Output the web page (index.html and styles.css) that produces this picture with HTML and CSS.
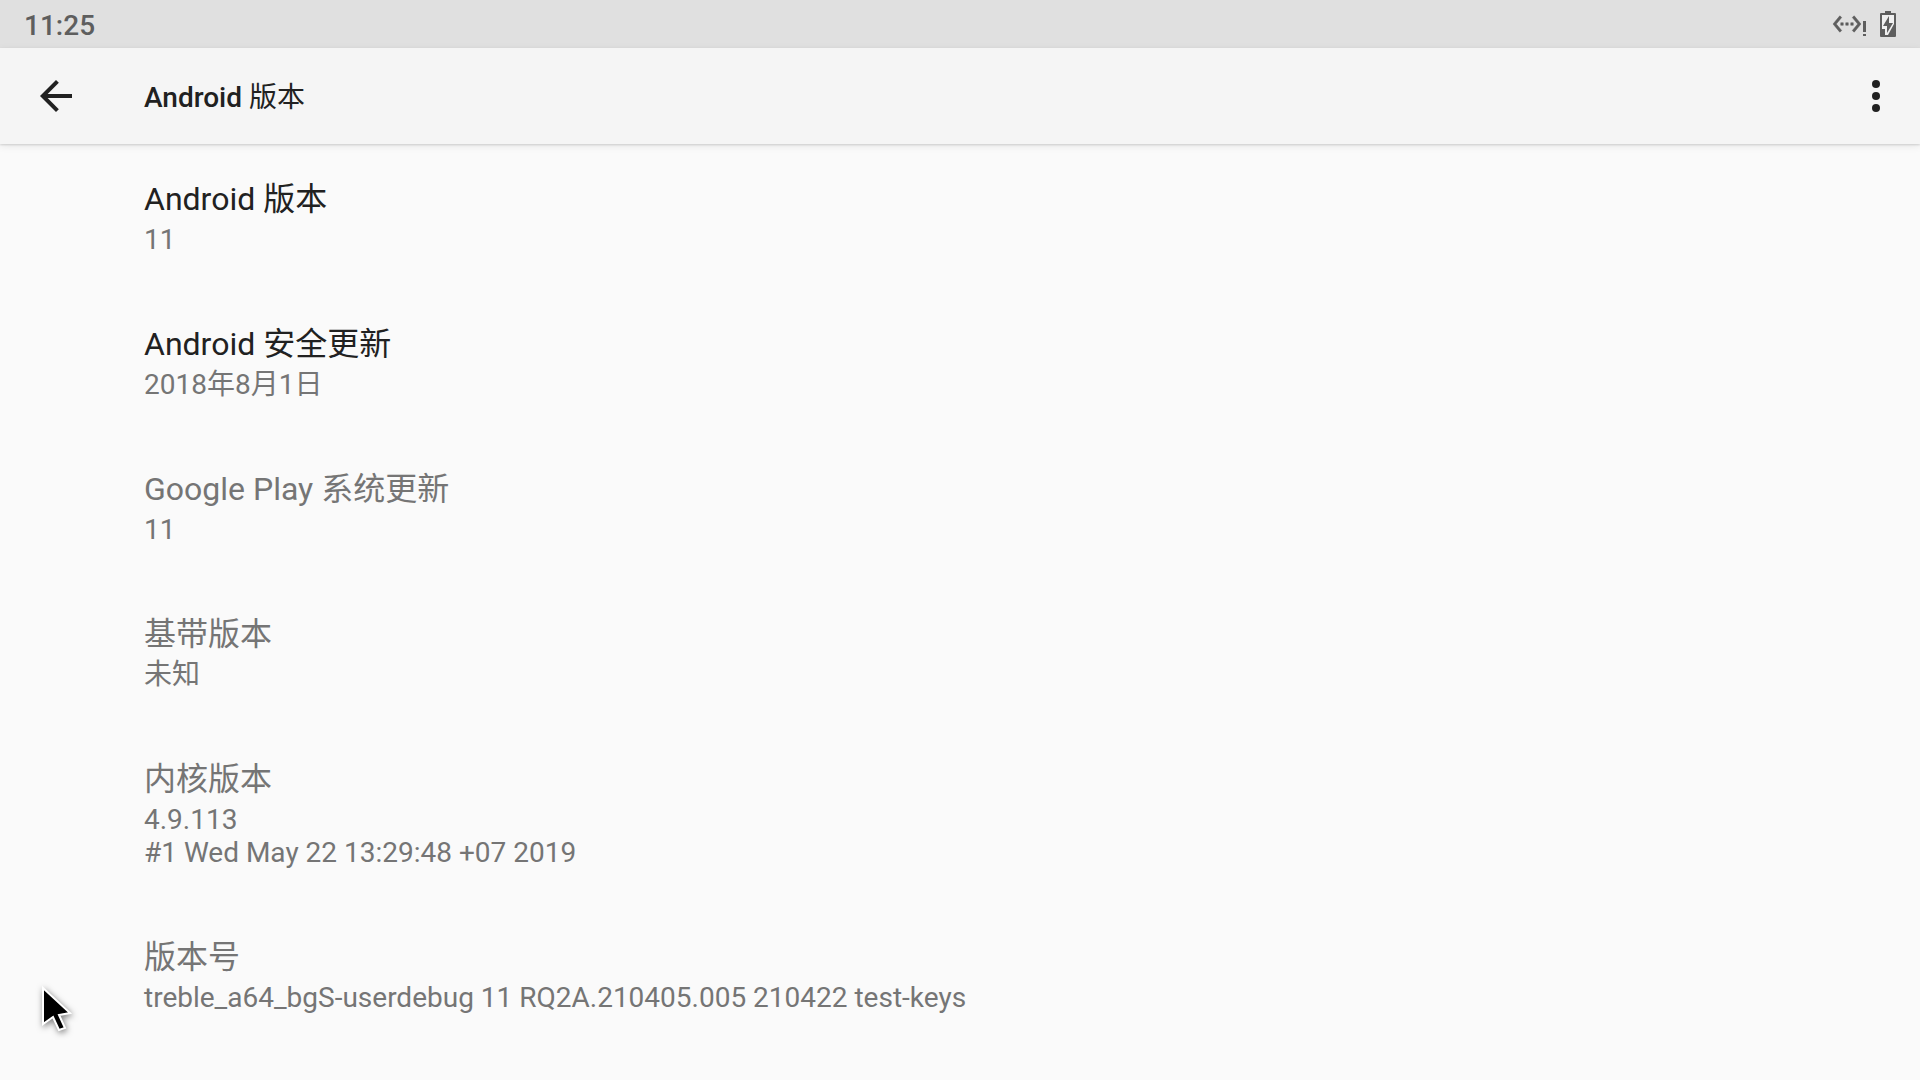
FILE: index.html
```
<!DOCTYPE html>
<html lang="zh-CN">

<head>
  <meta charset="UTF-8">
  <meta name="viewport" content="width=device-width, initial-scale=1">
  <title>Android 版本</title>
  <link rel="stylesheet" href="styles.css">
</head>

<body>
  <div class="status-bar">
    <time class="clock">11:25</time>
    <div class="status-icons">
      <svg class="icon-ethernet" viewBox="0 0 34 30" role="img" aria-label="Ethernet">
        <path class="arrows" transform="scale(1.25)" d="M7.77 6.76L6.23 5.48.82 12l5.41 6.52 1.54-1.28L3.42 12l4.35-5.24zM7 13h2v-2H7v2zm10-2h-2v2h2v-2zm-6 2h2v-2h-2v2zm6.77-7.52l-1.54 1.28L20.58 12l-4.35 5.24 1.54 1.28L23.18 12l-5.41-6.52z" />
        <path d="M31 12h3v11h-3zM31 25h3v2h-3z" />
      </svg>
      <svg class="icon-battery" viewBox="0 0 16 26" role="img" aria-label="Battery charging">
        <path d="M5 0h6v2h4q1 0 1 1v22q0 1-1 1H1q-1 0-1-1V3q0-1 1-1h4z" />
        <path class="battery-empty" d="M2 4h12v9L8 24H5v-6H2z" />
        <path d="M9 5L3 15h4v7l6-10H9z" />
      </svg>
    </div>
  </div>

  <header class="app-bar">
    <button class="icon-button" type="button" aria-label="返回">
      <svg viewBox="0 0 24 24">
        <path d="M20 11H7.83l5.59-5.59L12 4l-8 8 8 8 1.41-1.41L7.83 13H20v-2z" />
      </svg>
    </button>
    <h1 class="app-title">Android <span class="cjk">版本</span></h1>
    <button class="icon-button" type="button" aria-label="更多选项">
      <svg viewBox="0 0 24 24">
        <circle cx="12" cy="6" r="2" />
        <circle cx="12" cy="12" r="2" />
        <circle cx="12" cy="18" r="2" />
      </svg>
    </button>
  </header>

  <main>
    <ul class="preferences">
      <li class="preference">
        <h2>Android 版本</h2>
        <p>11</p>
      </li>
      <li class="preference">
        <h2>Android 安全更新</h2>
        <p>2018年8月1日</p>
      </li>
      <li class="preference disabled">
        <h2>Google Play 系统更新</h2>
        <p>11</p>
      </li>
      <li class="preference disabled">
        <h2>基带版本</h2>
        <p>未知</p>
      </li>
      <li class="preference disabled">
        <h2>内核版本</h2>
        <p>4.9.113<br>#1 Wed May 22 13:29:48 +07 2019</p>
      </li>
      <li class="preference disabled">
        <h2>版本号</h2>
        <p>treble_a64_bgS-userdebug 11 RQ2A.210405.005 210422 test-keys</p>
      </li>
    </ul>
  </main>

  <svg class="pointer" viewBox="0 0 30 46" aria-hidden="true">
    <path d="M2 2v36l10-7 6 13 6-2-6-13 11-2z" />
  </svg>
</body>

</html>
```
FILE: styles.css
```
* {
  box-sizing: border-box;
}

body {
  margin: 0;
  min-height: 100vh;
  background: #fafafa;
  color: #212121;
  font-family: Roboto, "Noto Sans CJK SC", sans-serif;
}

h1,
h2,
p,
ul {
  margin: 0;
  padding: 0;
}

.status-bar {
  display: flex;
  align-items: center;
  justify-content: space-between;
  height: 48px;
  padding: 0 24px;
  background: #e0e0e0;
  color: #5e5e5e;
}

.clock {
  padding-top: 4px;
  font-size: 28px;
  font-weight: 500;
  line-height: 32px;
}

.status-icons {
  display: flex;
  align-items: center;
  gap: 14px;
  fill: #5e5e5e;
}

.icon-ethernet {
  width: 34px;
  height: 30px;
}

.arrows {
  stroke: #5e5e5e;
  stroke-width: .4;
}

.icon-battery {
  width: 16px;
  height: 26px;
}

.battery-empty {
  fill: #f0f0f0;
}

.app-bar {
  display: flex;
  align-items: center;
  height: 96px;
  padding: 0 20px 0 32px;
  background: #f5f5f5;
  box-shadow: 0 1px 2px rgba(0, 0, 0, .14), 0 2px 8px rgba(0, 0, 0, .08);
}

.app-title {
  flex: 1;
  padding: 4px 0 0 64px;
  font-size: 28px;
  font-weight: 500;
  line-height: 32px;
}

.cjk {
  font-weight: 400;
}

.icon-button {
  width: 48px;
  height: 48px;
  padding: 0;
  border: 0;
  background: none;
  fill: #212121;
}

.icon-button svg {
  display: block;
}

.preferences {
  list-style: none;
}

.preference {
  padding: 33px 144px;
}

.preference h2 {
  margin-bottom: 2px;
  font-size: 32px;
  font-weight: 400;
  line-height: 44px;
}

.preference p {
  color: #757575;
  font-size: 28px;
  line-height: 33px;
}

.preference.disabled h2 {
  color: #757575;
}

/* mouse pointer floats over the page */
.pointer {
  position: fixed;
  left: 41px;
  top: 986px;
  width: 30px;
  height: 46px;
  overflow: visible;
  fill: #000;
  stroke: #fff;
  stroke-width: 2;
  filter: drop-shadow(1px 2px 3px rgba(0, 0, 0, .5));
}
```
